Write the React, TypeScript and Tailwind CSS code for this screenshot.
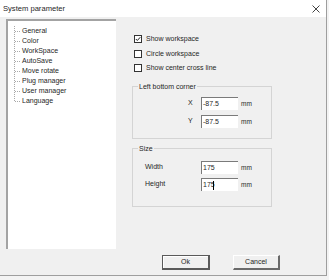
const treeItems = [
  "General",
  "Color",
  "WorkSpace",
  "AutoSave",
  "Move rotate",
  "Plug manager",
  "User manager",
  "Language",
]

function TreeLine({ last }: { last: boolean }) {
  return (
    <svg width="7" height="10" viewBox="0 0 7 10" className="shrink-0">
      <line x1="0.5" y1="0" x2="0.5" y2={last ? 5.5 : 10} stroke="#a8a8a8" strokeDasharray="1 1" />
      <line x1="1" y1="5.5" x2="7" y2="5.5" stroke="#a8a8a8" strokeDasharray="1 1" />
    </svg>
  )
}

function Checkbox({ label, checked }: { label: string; checked?: boolean }) {
  return (
    <div className="flex items-center h-[14.5px] pl-[2px]">
      <div className="w-[8px] h-[8px] border border-[#333] bg-white flex items-center justify-center">
        {checked && (
          <svg width="6" height="6" viewBox="0 0 6 6">
            <path d="M0.8 3 L2.3 4.5 L5.3 1.2" stroke="#222" strokeWidth="1" fill="none" />
          </svg>
        )}
      </div>
      <span className="ml-[4px]">{label}</span>
    </div>
  )
}

function Field({ value, cursor }: { value: string; cursor?: boolean }) {
  return (
    <div className="w-[37px] h-[13px] bg-white border-t border-l border-[#7a7a7a] flex items-center pl-[1px]">
      <span>{value}</span>
      {cursor && <span className="w-px h-[9px] bg-black -ml-[2px]" />}
    </div>
  )
}

function Group({ title, className, children }: { title: string; className: string; children: React.ReactNode }) {
  return (
    <div className={`relative w-[140px] border border-[#d4d4d4] ${className}`}>
      <span className="absolute -top-[6px] left-[5px] bg-[#f0f0f0] px-[1px] leading-[11px]">{title}</span>
      {children}
    </div>
  )
}

export default function App() {
  return (
    <div className="w-[329px] h-[280px] bg-[#f3f3f3] text-[7px] text-[#262626] font-['Liberation_Sans',Arial,sans-serif]">
      <div className="w-[327px] h-[276px] bg-[#f0f0f0] border-r border-b border-[#9e9e9e] flex flex-col">

        {/* TITLE BAR */}
        <div className="h-[17px] bg-white flex items-center justify-between pl-[3px] pr-[6px] shrink-0">
          <span className="text-[7.6px]">System parameter</span>
          <svg width="8" height="8" viewBox="0 0 8 8">
            <path d="M0.5 0.5 L7.5 7.5 M7.5 0.5 L0.5 7.5" stroke="#444" strokeWidth="1" />
          </svg>
        </div>

        <div className="flex pl-[6px] pt-[2px]">

          {/* TREE */}
          <div className="w-[110px] h-[230px] bg-white border-t-2 border-l-2 border-[#a3a3a3] pt-[5px] pl-[6px]">
            {treeItems.map((item, i) => (
              <div key={item} className="flex items-center h-[10px]">
                <TreeLine last={i === treeItems.length - 1} />
                <span className="ml-px leading-[10px]">{item}</span>
              </div>
            ))}
          </div>

          {/* SETTINGS */}
          <div className="ml-[16px] pt-[13px] flex flex-col">
            <Checkbox label="Show workspace" checked />
            <Checkbox label="Circle workspace" />
            <Checkbox label="Show center cross line" />

            <Group title="Left bottom corner" className="h-[53px] mt-[10.5px] pt-[10px]">
              <div className="flex items-center h-[13px] pl-[55px]">
                <span className="w-[13px]">X</span>
                <Field value="-87.5" />
                <span className="ml-[3px] text-[6.5px]">mm</span>
              </div>
              <div className="flex items-center h-[13px] mt-[5px] pl-[55px]">
                <span className="w-[13px]">Y</span>
                <Field value="-87.5" />
                <span className="ml-[3px] text-[6.5px]">mm</span>
              </div>
            </Group>

            <Group title="Size" className="h-[59px] mt-[9px] pt-[12px]">
              <div className="flex items-center h-[13px] pl-[12px]">
                <span className="w-[56px]">Width</span>
                <Field value="175" />
                <span className="ml-[3px] text-[6.5px]">mm</span>
              </div>
              <div className="flex items-center h-[13px] mt-[4px] pl-[12px]">
                <span className="w-[56px]">Height</span>
                <Field value="175" cursor />
                <span className="ml-[3px] text-[6.5px]">mm</span>
              </div>
            </Group>
          </div>
        </div>

        {/* BUTTONS */}
        <div className="flex gap-[23px] pl-[162px] mt-[6px]">
          <button className="w-[48px] h-[15px] bg-[#f0f0f0] border border-[#5a5a5a] border-r-2 border-b-2 shadow-[inset_1px_1px_0_#fff] flex items-center justify-center">
            Ok
          </button>
          <button className="w-[47px] h-[15px] bg-[#f0f0f0] border-t border-l border-[#fff] border-r-2 border-b-2 border-r-[#6a6a6a] border-b-[#6a6a6a] flex items-center justify-center">
            Cancel
          </button>
        </div>
      </div>
    </div>
  )
}
